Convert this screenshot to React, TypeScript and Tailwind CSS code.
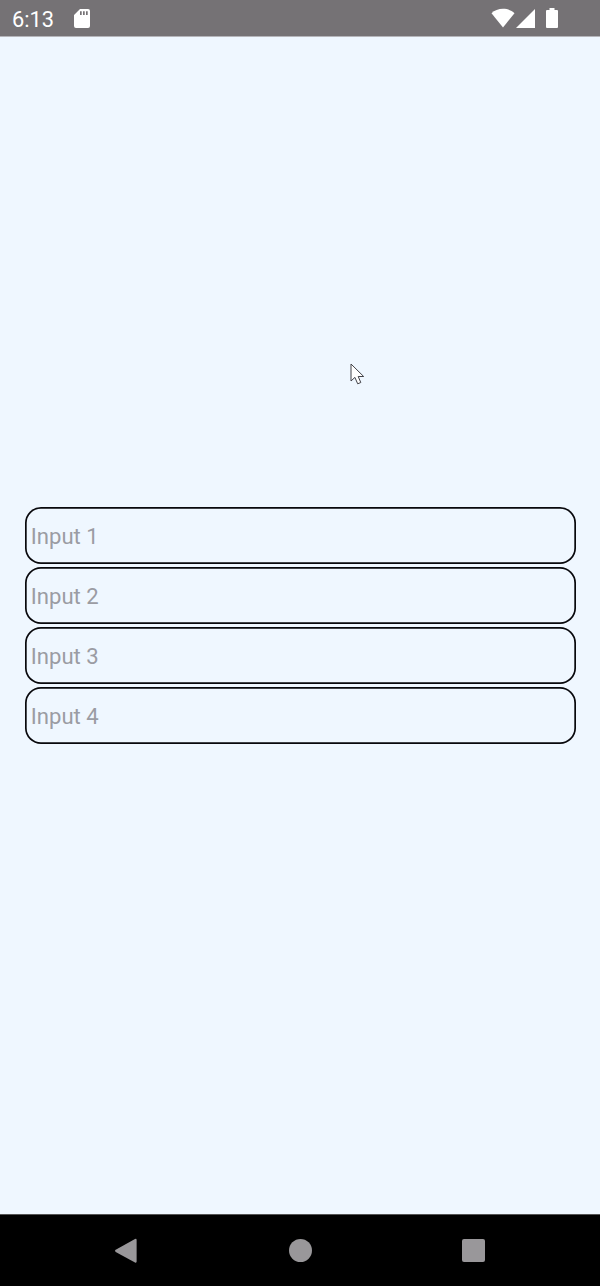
const fields = ['Input 1', 'Input 2', 'Input 3', 'Input 4'];

function StatusBar() {
  return (
    <header className="flex h-[37px] shrink-0 items-start border-b border-[#b5b5ba] bg-[#757275] text-white">
      <span className="mt-[5px] ml-[12px] w-[61.5px] text-[21.8px] leading-[30px]">6:13</span>
      <svg className="mt-[9px] h-[19px] w-[16px]" viewBox="0 0 16 19" fill="currentColor">
        <path
          fillRule="evenodd"
          d="M6 0H14Q16 0 16 2V17Q16 19 14 19H2Q0 19 0 17V6ZM6 2.3V6H7.7V2.3ZM9 2.3V6H10.7V2.3ZM12 2.3V6H13.7V2.3Z"
        />
      </svg>
      <svg className="mt-[8px] ml-auto h-[20px] w-[24px]" viewBox="0 0 24 20" fill="currentColor">
        <path d="M12 19.5L.5 5.3C6-.7 18-.7 23.5 5.3Z" />
      </svg>
      <svg className="mt-[9px] ml-[1px] h-[19px] w-[19px]" viewBox="0 0 19 19" fill="currentColor">
        <path d="M19 0V19H0Z" />
      </svg>
      <svg className="mt-[8px] mr-[42px] ml-[11px] h-[20px] w-[12px]" viewBox="0 0 12 20" fill="currentColor">
        <path d="M3.5 0H8.5V2H11Q12 2 12 3V19Q12 20 11 20H1Q0 20 0 19V3Q0 2 1 2H3.5Z" />
      </svg>
    </header>
  );
}

function NavigationBar() {
  return (
    <nav className="flex h-[72px] shrink-0 items-center justify-between border-t border-[#555] bg-black pr-[115px] pl-[114px] text-[#99979a]">
      <svg className="h-[26px] w-[24px]" viewBox="0 0 24 26" fill="currentColor">
        <path d="M21 1.1Q22.6.3 22.6 2V23.5Q22.6 25.2 21 24.4L1.7 13.9Q.1 12.8 1.7 11.7Z" />
      </svg>
      <span className="h-[23px] w-[23px] rounded-full bg-[#99979a]" />
      <span className="h-[23px] w-[23px] rounded-[2px] bg-[#99979a]" />
    </nav>
  );
}

export default function App() {
  return (
    <div className="relative flex h-[1286px] w-[600px] flex-col overflow-hidden bg-[#eff7ff] font-['Roboto',sans-serif]">
      <StatusBar />
      <main className="flex flex-1 flex-col justify-center gap-[3px] pr-[24px] pl-[25px]">
        {fields.map((label) => (
          <div
            key={label}
            className="flex h-[57px] items-center rounded-[16px] pl-[5.8px] text-[22.1px] leading-[30px] text-[#9b9ca3] shadow-[inset_0_0_0_1.7px_#08080c]"
          >
            {label}
          </div>
        ))}
      </main>
      <NavigationBar />
      <svg className="absolute top-[363px] left-[350px] h-[22px] w-[15px]" viewBox="0 0 15 22">
        <path
          d="M1 1V18L4.9 14.4L7.7 20.8L10.8 19.5L8.2 13.5H13.7Z"
          fill="white"
          stroke="#424248"
          strokeWidth="1"
        />
      </svg>
    </div>
  );
}
